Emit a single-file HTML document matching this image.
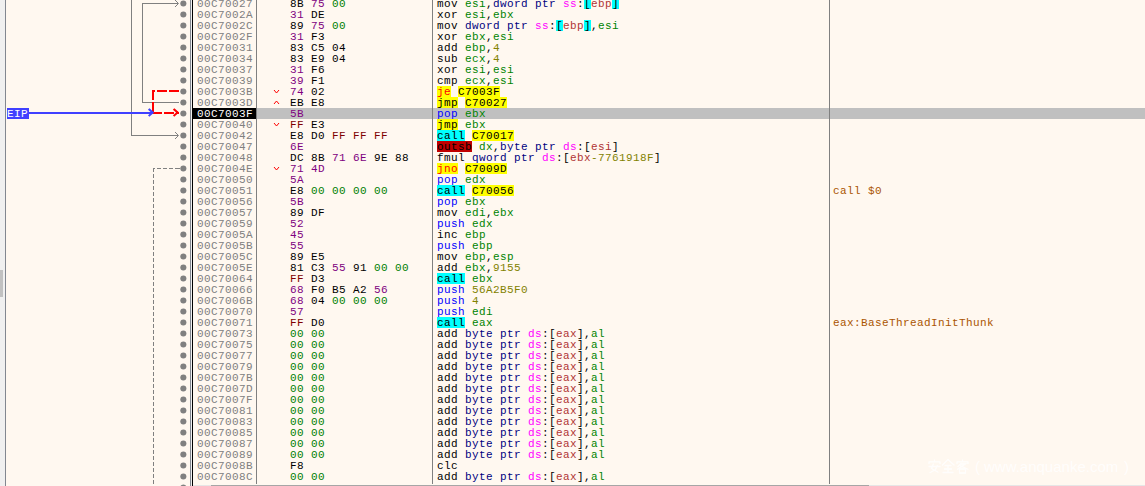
<!DOCTYPE html>
<html><head><meta charset="utf-8"><title>x64dbg</title>
<style>
html,body{margin:0;padding:0;}
body{width:1145px;height:486px;overflow:hidden;background:#fff8f0;position:relative;}
#root{position:absolute;left:0;top:0;width:1145px;height:486px;overflow:hidden;background:#fff8f0;}
.t{position:absolute;height:11px;line-height:11px;font-family:"Liberation Mono",monospace;font-size:11px;letter-spacing:0.4px;white-space:pre;overflow:visible;}
.t i{font-style:normal;position:relative;top:1px;}
.r{position:absolute;left:0;width:1145px;height:11px;}
.ln{position:absolute;}
</style></head><body><div id="root">
<div class="ln" style="left:257px;top:108px;width:888px;height:11px;background:#c0c0c0"></div>
<div class="ln" style="left:193px;top:108px;width:63px;height:11px;background:#000"></div>
<div class="ln" style="left:0;top:0;width:5px;height:486px;background:#f0f0f0"></div>
<div class="ln" style="left:0;top:270px;width:3px;height:27px;background:#c1c1c1"></div>
<div class="ln" style="left:5px;top:0;width:1px;height:486px;background:#828790"></div>
<div class="ln" style="left:190px;top:0;width:1px;height:486px;background:#828790"></div>
<div class="ln" style="left:191px;top:0;width:1px;height:486px;background:#f0f0f0"></div>
<div class="ln" style="left:192px;top:0;width:1px;height:486px;background:#000"></div>
<div class="ln" style="left:256px;top:0;width:1px;height:484px;background:#808080"></div>
<div class="ln" style="left:432px;top:0;width:1px;height:484px;background:#808080"></div>
<div class="ln" style="left:829px;top:0;width:1px;height:484px;background:#808080"></div>
<svg class="ln" style="left:0;top:0" width="193" height="486" viewBox="0 0 193 486"><g fill="none" stroke="#808080" stroke-width="1" shape-rendering="crispEdges"><path d="M131.5 -1 V135.5 H178"/><path d="M179 102.5 H142.5 V3.5 H178"/></g><g fill="none" stroke="#808080" stroke-width="1"><path d="M175 132.0 L178.5 135.5 L175 139.0"/><path d="M175 0.0 L178.5 3.5 L175 7.0"/></g><g fill="#808080" shape-rendering="crispEdges"><rect x="175" y="168" width="5" height="1"/><rect x="169" y="168" width="4" height="1"/><rect x="163" y="168" width="4" height="1"/><rect x="157" y="168" width="4" height="1"/><rect x="153" y="168" width="2" height="1"/><rect x="153" y="168" width="1" height="4"/><rect x="153" y="174" width="1" height="4"/><rect x="153" y="180" width="1" height="4"/><rect x="153" y="186" width="1" height="4"/><rect x="153" y="192" width="1" height="4"/><rect x="153" y="198" width="1" height="4"/><rect x="153" y="204" width="1" height="4"/><rect x="153" y="210" width="1" height="4"/><rect x="153" y="216" width="1" height="4"/><rect x="153" y="222" width="1" height="4"/><rect x="153" y="228" width="1" height="4"/><rect x="153" y="234" width="1" height="4"/><rect x="153" y="240" width="1" height="4"/><rect x="153" y="246" width="1" height="4"/><rect x="153" y="252" width="1" height="4"/><rect x="153" y="258" width="1" height="4"/><rect x="153" y="264" width="1" height="4"/><rect x="153" y="270" width="1" height="4"/><rect x="153" y="276" width="1" height="4"/><rect x="153" y="282" width="1" height="4"/><rect x="153" y="288" width="1" height="4"/><rect x="153" y="294" width="1" height="4"/><rect x="153" y="300" width="1" height="4"/><rect x="153" y="306" width="1" height="4"/><rect x="153" y="312" width="1" height="4"/><rect x="153" y="318" width="1" height="4"/><rect x="153" y="324" width="1" height="4"/><rect x="153" y="330" width="1" height="4"/><rect x="153" y="336" width="1" height="4"/><rect x="153" y="342" width="1" height="4"/><rect x="153" y="348" width="1" height="4"/><rect x="153" y="354" width="1" height="4"/><rect x="153" y="360" width="1" height="4"/><rect x="153" y="366" width="1" height="4"/><rect x="153" y="372" width="1" height="4"/><rect x="153" y="378" width="1" height="4"/><rect x="153" y="384" width="1" height="4"/><rect x="153" y="390" width="1" height="4"/><rect x="153" y="396" width="1" height="4"/><rect x="153" y="402" width="1" height="4"/><rect x="153" y="408" width="1" height="4"/><rect x="153" y="414" width="1" height="4"/><rect x="153" y="420" width="1" height="4"/><rect x="153" y="426" width="1" height="4"/><rect x="153" y="432" width="1" height="4"/><rect x="153" y="438" width="1" height="4"/><rect x="153" y="444" width="1" height="4"/><rect x="153" y="450" width="1" height="4"/><rect x="153" y="456" width="1" height="4"/><rect x="153" y="462" width="1" height="4"/><rect x="153" y="468" width="1" height="4"/><rect x="153" y="474" width="1" height="4"/><rect x="153" y="480" width="1" height="4"/></g><g fill="#ff0000" shape-rendering="crispEdges"><rect x="169" y="90" width="10" height="2"/><rect x="157" y="90" width="10" height="2"/><rect x="152" y="90" width="3" height="2"/><rect x="152" y="90" width="2" height="10"/><rect x="152" y="102" width="2" height="12"/><rect x="152" y="112" width="10" height="2"/><rect x="164" y="112" width="10" height="2"/><rect x="176" y="112" width="3" height="2"/></g><path d="M174.3 109.6 L177.6 112.6 M174.3 115.4 L177.6 112.4" fill="none" stroke="#ff0000" stroke-width="2" stroke-linecap="square"/><rect x="29" y="112" width="124" height="2" fill="#4040ff" shape-rendering="crispEdges"/><path d="M149.4 109.6 L152.7 112.6 M149.4 115.4 L152.7 112.4" fill="none" stroke="#4040ff" stroke-width="2" stroke-linecap="square"/><circle cx="183.35" cy="3.45" r="3.05" fill="#808080"/><circle cx="183.35" cy="14.45" r="3.05" fill="#808080"/><circle cx="183.35" cy="25.45" r="3.05" fill="#808080"/><circle cx="183.35" cy="36.45" r="3.05" fill="#808080"/><circle cx="183.35" cy="47.45" r="3.05" fill="#808080"/><circle cx="183.35" cy="58.45" r="3.05" fill="#808080"/><circle cx="183.35" cy="69.45" r="3.05" fill="#808080"/><circle cx="183.35" cy="80.45" r="3.05" fill="#808080"/><circle cx="183.35" cy="91.45" r="3.05" fill="#808080"/><circle cx="183.35" cy="102.45" r="3.05" fill="#808080"/><circle cx="183.35" cy="113.45" r="3.05" fill="#808080"/><circle cx="183.35" cy="124.45" r="3.05" fill="#808080"/><circle cx="183.35" cy="135.45" r="3.05" fill="#808080"/><circle cx="183.35" cy="146.45" r="3.05" fill="#808080"/><circle cx="183.35" cy="157.45" r="3.05" fill="#808080"/><circle cx="183.35" cy="168.45" r="3.05" fill="#808080"/><circle cx="183.35" cy="179.45" r="3.05" fill="#808080"/><circle cx="183.35" cy="190.45" r="3.05" fill="#808080"/><circle cx="183.35" cy="201.45" r="3.05" fill="#808080"/><circle cx="183.35" cy="212.45" r="3.05" fill="#808080"/><circle cx="183.35" cy="223.45" r="3.05" fill="#808080"/><circle cx="183.35" cy="234.45" r="3.05" fill="#808080"/><circle cx="183.35" cy="245.45" r="3.05" fill="#808080"/><circle cx="183.35" cy="256.45" r="3.05" fill="#808080"/><circle cx="183.35" cy="267.45" r="3.05" fill="#808080"/><circle cx="183.35" cy="278.45" r="3.05" fill="#808080"/><circle cx="183.35" cy="289.45" r="3.05" fill="#808080"/><circle cx="183.35" cy="300.45" r="3.05" fill="#808080"/><circle cx="183.35" cy="311.45" r="3.05" fill="#808080"/><circle cx="183.35" cy="322.45" r="3.05" fill="#808080"/><circle cx="183.35" cy="333.45" r="3.05" fill="#808080"/><circle cx="183.35" cy="344.45" r="3.05" fill="#808080"/><circle cx="183.35" cy="355.45" r="3.05" fill="#808080"/><circle cx="183.35" cy="366.45" r="3.05" fill="#808080"/><circle cx="183.35" cy="377.45" r="3.05" fill="#808080"/><circle cx="183.35" cy="388.45" r="3.05" fill="#808080"/><circle cx="183.35" cy="399.45" r="3.05" fill="#808080"/><circle cx="183.35" cy="410.45" r="3.05" fill="#808080"/><circle cx="183.35" cy="421.45" r="3.05" fill="#808080"/><circle cx="183.35" cy="432.45" r="3.05" fill="#808080"/><circle cx="183.35" cy="443.45" r="3.05" fill="#808080"/><circle cx="183.35" cy="454.45" r="3.05" fill="#808080"/><circle cx="183.35" cy="465.45" r="3.05" fill="#808080"/><circle cx="183.35" cy="476.45" r="3.05" fill="#808080"/><circle cx="183.35" cy="487.45" r="3.05" fill="#808080"/></svg>
<div class="ln" style="left:7px;top:108px;width:22px;height:11px;background:#4040ff"></div>
<span class="t" style="left:7px;top:108px;color:#fff"><i>EIP</i></span>
<span class="t" style="left:197px;top:-2px;width:56px;color:#808080;"><i>00C70027</i></span>
<span class="t" style="left:290px;top:-2px;width:14px;color:#000000;"><i>8B</i></span>
<span class="t" style="left:311px;top:-2px;width:14px;color:#800080;"><i>75</i></span>
<span class="t" style="left:332px;top:-2px;width:14px;color:#008000;"><i>00</i></span>
<span class="t" style="left:437px;top:-2px;width:21px;color:#000000;"><i>mov</i></span>
<span class="t" style="left:465px;top:-2px;width:21px;color:#008300;"><i>esi</i></span>
<span class="t" style="left:486px;top:-2px;width:7px;color:#000000;"><i>,</i></span>
<span class="t" style="left:493px;top:-2px;width:63px;color:#000080;"><i>dword ptr</i></span>
<span class="t" style="left:563px;top:-2px;width:14px;color:#ff00ff;"><i>ss</i></span>
<span class="t" style="left:577px;top:-2px;width:7px;color:#000000;"><i>:</i></span>
<span class="t" style="left:584px;top:-2px;width:7px;color:#000000;background:#00ffff;"><i>[</i></span>
<span class="t" style="left:591px;top:-2px;width:21px;color:#b03434;"><i>ebp</i></span>
<span class="t" style="left:612px;top:-2px;width:7px;color:#000000;background:#00ffff;"><i>]</i></span>
<span class="t" style="left:197px;top:9px;width:56px;color:#808080;"><i>00C7002A</i></span>
<span class="t" style="left:290px;top:9px;width:14px;color:#800080;"><i>31</i></span>
<span class="t" style="left:311px;top:9px;width:14px;color:#000000;"><i>DE</i></span>
<span class="t" style="left:437px;top:9px;width:21px;color:#000000;"><i>xor</i></span>
<span class="t" style="left:465px;top:9px;width:21px;color:#008300;"><i>esi</i></span>
<span class="t" style="left:486px;top:9px;width:7px;color:#000000;"><i>,</i></span>
<span class="t" style="left:493px;top:9px;width:21px;color:#008300;"><i>ebx</i></span>
<span class="t" style="left:197px;top:20px;width:56px;color:#808080;"><i>00C7002C</i></span>
<span class="t" style="left:290px;top:20px;width:14px;color:#000000;"><i>89</i></span>
<span class="t" style="left:311px;top:20px;width:14px;color:#800080;"><i>75</i></span>
<span class="t" style="left:332px;top:20px;width:14px;color:#008000;"><i>00</i></span>
<span class="t" style="left:437px;top:20px;width:21px;color:#000000;"><i>mov</i></span>
<span class="t" style="left:465px;top:20px;width:63px;color:#000080;"><i>dword ptr</i></span>
<span class="t" style="left:535px;top:20px;width:14px;color:#ff00ff;"><i>ss</i></span>
<span class="t" style="left:549px;top:20px;width:7px;color:#000000;"><i>:</i></span>
<span class="t" style="left:556px;top:20px;width:7px;color:#000000;background:#00ffff;"><i>[</i></span>
<span class="t" style="left:563px;top:20px;width:21px;color:#b03434;"><i>ebp</i></span>
<span class="t" style="left:584px;top:20px;width:7px;color:#000000;background:#00ffff;"><i>]</i></span>
<span class="t" style="left:591px;top:20px;width:7px;color:#000000;"><i>,</i></span>
<span class="t" style="left:598px;top:20px;width:21px;color:#008300;"><i>esi</i></span>
<span class="t" style="left:197px;top:31px;width:56px;color:#808080;"><i>00C7002F</i></span>
<span class="t" style="left:290px;top:31px;width:14px;color:#800080;"><i>31</i></span>
<span class="t" style="left:311px;top:31px;width:14px;color:#000000;"><i>F3</i></span>
<span class="t" style="left:437px;top:31px;width:21px;color:#000000;"><i>xor</i></span>
<span class="t" style="left:465px;top:31px;width:21px;color:#008300;"><i>ebx</i></span>
<span class="t" style="left:486px;top:31px;width:7px;color:#000000;"><i>,</i></span>
<span class="t" style="left:493px;top:31px;width:21px;color:#008300;"><i>esi</i></span>
<span class="t" style="left:197px;top:42px;width:56px;color:#808080;"><i>00C70031</i></span>
<span class="t" style="left:290px;top:42px;width:14px;color:#000000;"><i>83</i></span>
<span class="t" style="left:311px;top:42px;width:14px;color:#000000;"><i>C5</i></span>
<span class="t" style="left:332px;top:42px;width:14px;color:#000000;"><i>04</i></span>
<span class="t" style="left:437px;top:42px;width:21px;color:#000000;"><i>add</i></span>
<span class="t" style="left:465px;top:42px;width:21px;color:#008300;"><i>ebp</i></span>
<span class="t" style="left:486px;top:42px;width:7px;color:#000000;"><i>,</i></span>
<span class="t" style="left:493px;top:42px;width:7px;color:#828200;"><i>4</i></span>
<span class="t" style="left:197px;top:53px;width:56px;color:#808080;"><i>00C70034</i></span>
<span class="t" style="left:290px;top:53px;width:14px;color:#000000;"><i>83</i></span>
<span class="t" style="left:311px;top:53px;width:14px;color:#000000;"><i>E9</i></span>
<span class="t" style="left:332px;top:53px;width:14px;color:#000000;"><i>04</i></span>
<span class="t" style="left:437px;top:53px;width:21px;color:#000000;"><i>sub</i></span>
<span class="t" style="left:465px;top:53px;width:21px;color:#008300;"><i>ecx</i></span>
<span class="t" style="left:486px;top:53px;width:7px;color:#000000;"><i>,</i></span>
<span class="t" style="left:493px;top:53px;width:7px;color:#828200;"><i>4</i></span>
<span class="t" style="left:197px;top:64px;width:56px;color:#808080;"><i>00C70037</i></span>
<span class="t" style="left:290px;top:64px;width:14px;color:#800080;"><i>31</i></span>
<span class="t" style="left:311px;top:64px;width:14px;color:#000000;"><i>F6</i></span>
<span class="t" style="left:437px;top:64px;width:21px;color:#000000;"><i>xor</i></span>
<span class="t" style="left:465px;top:64px;width:21px;color:#008300;"><i>esi</i></span>
<span class="t" style="left:486px;top:64px;width:7px;color:#000000;"><i>,</i></span>
<span class="t" style="left:493px;top:64px;width:21px;color:#008300;"><i>esi</i></span>
<span class="t" style="left:197px;top:75px;width:56px;color:#808080;"><i>00C70039</i></span>
<span class="t" style="left:290px;top:75px;width:14px;color:#800080;"><i>39</i></span>
<span class="t" style="left:311px;top:75px;width:14px;color:#000000;"><i>F1</i></span>
<span class="t" style="left:437px;top:75px;width:21px;color:#000000;"><i>cmp</i></span>
<span class="t" style="left:465px;top:75px;width:21px;color:#008300;"><i>ecx</i></span>
<span class="t" style="left:486px;top:75px;width:7px;color:#000000;"><i>,</i></span>
<span class="t" style="left:493px;top:75px;width:21px;color:#008300;"><i>esi</i></span>
<span class="t" style="left:197px;top:86px;width:56px;color:#808080;"><i>00C7003B</i></span>
<svg class="ln" style="left:0;top:0" width="300" height="486"><path d="M274 90.0 L276.5 93.0 L279 90.0" fill="none" stroke="#ff0000" stroke-width="1"/></svg>
<span class="t" style="left:290px;top:86px;width:14px;color:#800080;"><i>74</i></span>
<span class="t" style="left:311px;top:86px;width:14px;color:#000000;"><i>02</i></span>
<span class="t" style="left:437px;top:86px;width:14px;color:#ff0000;background:#ffff00;"><i>je</i></span>
<span class="t" style="left:458px;top:86px;width:42px;color:#000000;background:#ffff00;"><i>C7003F</i></span>
<span class="t" style="left:197px;top:97px;width:56px;color:#808080;"><i>00C7003D</i></span>
<svg class="ln" style="left:0;top:0" width="300" height="486"><path d="M274 104.0 L276.5 101.0 L279 104.0" fill="none" stroke="#ff0000" stroke-width="1"/></svg>
<span class="t" style="left:290px;top:97px;width:14px;color:#000000;"><i>EB</i></span>
<span class="t" style="left:311px;top:97px;width:14px;color:#000000;"><i>E8</i></span>
<span class="t" style="left:437px;top:97px;width:21px;color:#000000;background:#ffff00;"><i>jmp</i></span>
<span class="t" style="left:465px;top:97px;width:42px;color:#000000;background:#ffff00;"><i>C70027</i></span>
<span class="t" style="left:197px;top:108px;width:56px;color:#ffffff;"><i>00C7003F</i></span>
<span class="t" style="left:290px;top:108px;width:14px;color:#800080;"><i>5B</i></span>
<span class="t" style="left:437px;top:108px;width:21px;color:#0000ff;"><i>pop</i></span>
<span class="t" style="left:465px;top:108px;width:21px;color:#008300;"><i>ebx</i></span>
<span class="t" style="left:197px;top:119px;width:56px;color:#808080;"><i>00C70040</i></span>
<svg class="ln" style="left:0;top:0" width="300" height="486"><path d="M274 123.0 L276.5 126.0 L279 123.0" fill="none" stroke="#ff0000" stroke-width="1"/></svg>
<span class="t" style="left:290px;top:119px;width:14px;color:#800000;"><i>FF</i></span>
<span class="t" style="left:311px;top:119px;width:14px;color:#000000;"><i>E3</i></span>
<span class="t" style="left:437px;top:119px;width:21px;color:#000000;background:#ffff00;"><i>jmp</i></span>
<span class="t" style="left:465px;top:119px;width:21px;color:#008300;"><i>ebx</i></span>
<span class="t" style="left:197px;top:130px;width:56px;color:#808080;"><i>00C70042</i></span>
<span class="t" style="left:290px;top:130px;width:14px;color:#000000;"><i>E8</i></span>
<span class="t" style="left:311px;top:130px;width:14px;color:#000000;"><i>D0</i></span>
<span class="t" style="left:332px;top:130px;width:14px;color:#800000;"><i>FF</i></span>
<span class="t" style="left:353px;top:130px;width:14px;color:#800000;"><i>FF</i></span>
<span class="t" style="left:374px;top:130px;width:14px;color:#800000;"><i>FF</i></span>
<span class="t" style="left:437px;top:130px;width:28px;color:#000000;background:#00ffff;"><i>call</i></span>
<span class="t" style="left:472px;top:130px;width:42px;color:#000000;background:#ffff00;"><i>C70017</i></span>
<span class="t" style="left:197px;top:141px;width:56px;color:#808080;"><i>00C70047</i></span>
<span class="t" style="left:290px;top:141px;width:14px;color:#800080;"><i>6E</i></span>
<span class="t" style="left:437px;top:141px;width:35px;color:#000000;background:#c00000;"><i>outsb</i></span>
<span class="t" style="left:479px;top:141px;width:14px;color:#008300;"><i>dx</i></span>
<span class="t" style="left:493px;top:141px;width:7px;color:#000000;"><i>,</i></span>
<span class="t" style="left:500px;top:141px;width:56px;color:#000080;"><i>byte ptr</i></span>
<span class="t" style="left:563px;top:141px;width:14px;color:#ff00ff;"><i>ds</i></span>
<span class="t" style="left:577px;top:141px;width:7px;color:#000000;"><i>:</i></span>
<span class="t" style="left:584px;top:141px;width:7px;color:#000000;"><i>[</i></span>
<span class="t" style="left:591px;top:141px;width:21px;color:#b03434;"><i>esi</i></span>
<span class="t" style="left:612px;top:141px;width:7px;color:#000000;"><i>]</i></span>
<span class="t" style="left:197px;top:152px;width:56px;color:#808080;"><i>00C70048</i></span>
<span class="t" style="left:290px;top:152px;width:14px;color:#000000;"><i>DC</i></span>
<span class="t" style="left:311px;top:152px;width:14px;color:#000000;"><i>8B</i></span>
<span class="t" style="left:332px;top:152px;width:14px;color:#800080;"><i>71</i></span>
<span class="t" style="left:353px;top:152px;width:14px;color:#800080;"><i>6E</i></span>
<span class="t" style="left:374px;top:152px;width:14px;color:#000000;"><i>9E</i></span>
<span class="t" style="left:395px;top:152px;width:14px;color:#000000;"><i>88</i></span>
<span class="t" style="left:437px;top:152px;width:28px;color:#000000;"><i>fmul</i></span>
<span class="t" style="left:472px;top:152px;width:63px;color:#000080;"><i>qword ptr</i></span>
<span class="t" style="left:542px;top:152px;width:14px;color:#ff00ff;"><i>ds</i></span>
<span class="t" style="left:556px;top:152px;width:7px;color:#000000;"><i>:</i></span>
<span class="t" style="left:563px;top:152px;width:7px;color:#000000;"><i>[</i></span>
<span class="t" style="left:570px;top:152px;width:21px;color:#b03434;"><i>ebx</i></span>
<span class="t" style="left:591px;top:152px;width:63px;color:#828200;"><i>-7761918F</i></span>
<span class="t" style="left:654px;top:152px;width:7px;color:#000000;"><i>]</i></span>
<span class="t" style="left:197px;top:163px;width:56px;color:#808080;"><i>00C7004E</i></span>
<svg class="ln" style="left:0;top:0" width="300" height="486"><path d="M274 167.0 L276.5 170.0 L279 167.0" fill="none" stroke="#ff0000" stroke-width="1"/></svg>
<span class="t" style="left:290px;top:163px;width:14px;color:#800080;"><i>71</i></span>
<span class="t" style="left:311px;top:163px;width:14px;color:#800080;"><i>4D</i></span>
<span class="t" style="left:437px;top:163px;width:21px;color:#ff0000;background:#ffff00;"><i>jno</i></span>
<span class="t" style="left:465px;top:163px;width:42px;color:#000000;background:#ffff00;"><i>C7009D</i></span>
<span class="t" style="left:197px;top:174px;width:56px;color:#808080;"><i>00C70050</i></span>
<span class="t" style="left:290px;top:174px;width:14px;color:#800080;"><i>5A</i></span>
<span class="t" style="left:437px;top:174px;width:21px;color:#0000ff;"><i>pop</i></span>
<span class="t" style="left:465px;top:174px;width:21px;color:#008300;"><i>edx</i></span>
<span class="t" style="left:197px;top:185px;width:56px;color:#808080;"><i>00C70051</i></span>
<span class="t" style="left:290px;top:185px;width:14px;color:#000000;"><i>E8</i></span>
<span class="t" style="left:311px;top:185px;width:14px;color:#008000;"><i>00</i></span>
<span class="t" style="left:332px;top:185px;width:14px;color:#008000;"><i>00</i></span>
<span class="t" style="left:353px;top:185px;width:14px;color:#008000;"><i>00</i></span>
<span class="t" style="left:374px;top:185px;width:14px;color:#008000;"><i>00</i></span>
<span class="t" style="left:437px;top:185px;width:28px;color:#000000;background:#00ffff;"><i>call</i></span>
<span class="t" style="left:472px;top:185px;width:42px;color:#000000;background:#ffff00;"><i>C70056</i></span>
<span class="t" style="left:833px;top:185px;width:49px;color:#aa5500;"><i>call $0</i></span>
<span class="t" style="left:197px;top:196px;width:56px;color:#808080;"><i>00C70056</i></span>
<span class="t" style="left:290px;top:196px;width:14px;color:#800080;"><i>5B</i></span>
<span class="t" style="left:437px;top:196px;width:21px;color:#0000ff;"><i>pop</i></span>
<span class="t" style="left:465px;top:196px;width:21px;color:#008300;"><i>ebx</i></span>
<span class="t" style="left:197px;top:207px;width:56px;color:#808080;"><i>00C70057</i></span>
<span class="t" style="left:290px;top:207px;width:14px;color:#000000;"><i>89</i></span>
<span class="t" style="left:311px;top:207px;width:14px;color:#000000;"><i>DF</i></span>
<span class="t" style="left:437px;top:207px;width:21px;color:#000000;"><i>mov</i></span>
<span class="t" style="left:465px;top:207px;width:21px;color:#008300;"><i>edi</i></span>
<span class="t" style="left:486px;top:207px;width:7px;color:#000000;"><i>,</i></span>
<span class="t" style="left:493px;top:207px;width:21px;color:#008300;"><i>ebx</i></span>
<span class="t" style="left:197px;top:218px;width:56px;color:#808080;"><i>00C70059</i></span>
<span class="t" style="left:290px;top:218px;width:14px;color:#800080;"><i>52</i></span>
<span class="t" style="left:437px;top:218px;width:28px;color:#0000ff;"><i>push</i></span>
<span class="t" style="left:472px;top:218px;width:21px;color:#008300;"><i>edx</i></span>
<span class="t" style="left:197px;top:229px;width:56px;color:#808080;"><i>00C7005A</i></span>
<span class="t" style="left:290px;top:229px;width:14px;color:#800080;"><i>45</i></span>
<span class="t" style="left:437px;top:229px;width:21px;color:#000000;"><i>inc</i></span>
<span class="t" style="left:465px;top:229px;width:21px;color:#008300;"><i>ebp</i></span>
<span class="t" style="left:197px;top:240px;width:56px;color:#808080;"><i>00C7005B</i></span>
<span class="t" style="left:290px;top:240px;width:14px;color:#800080;"><i>55</i></span>
<span class="t" style="left:437px;top:240px;width:28px;color:#0000ff;"><i>push</i></span>
<span class="t" style="left:472px;top:240px;width:21px;color:#008300;"><i>ebp</i></span>
<span class="t" style="left:197px;top:251px;width:56px;color:#808080;"><i>00C7005C</i></span>
<span class="t" style="left:290px;top:251px;width:14px;color:#000000;"><i>89</i></span>
<span class="t" style="left:311px;top:251px;width:14px;color:#000000;"><i>E5</i></span>
<span class="t" style="left:437px;top:251px;width:21px;color:#000000;"><i>mov</i></span>
<span class="t" style="left:465px;top:251px;width:21px;color:#008300;"><i>ebp</i></span>
<span class="t" style="left:486px;top:251px;width:7px;color:#000000;"><i>,</i></span>
<span class="t" style="left:493px;top:251px;width:21px;color:#008300;"><i>esp</i></span>
<span class="t" style="left:197px;top:262px;width:56px;color:#808080;"><i>00C7005E</i></span>
<span class="t" style="left:290px;top:262px;width:14px;color:#000000;"><i>81</i></span>
<span class="t" style="left:311px;top:262px;width:14px;color:#000000;"><i>C3</i></span>
<span class="t" style="left:332px;top:262px;width:14px;color:#800080;"><i>55</i></span>
<span class="t" style="left:353px;top:262px;width:14px;color:#000000;"><i>91</i></span>
<span class="t" style="left:374px;top:262px;width:14px;color:#008000;"><i>00</i></span>
<span class="t" style="left:395px;top:262px;width:14px;color:#008000;"><i>00</i></span>
<span class="t" style="left:437px;top:262px;width:21px;color:#000000;"><i>add</i></span>
<span class="t" style="left:465px;top:262px;width:21px;color:#008300;"><i>ebx</i></span>
<span class="t" style="left:486px;top:262px;width:7px;color:#000000;"><i>,</i></span>
<span class="t" style="left:493px;top:262px;width:28px;color:#828200;"><i>9155</i></span>
<span class="t" style="left:197px;top:273px;width:56px;color:#808080;"><i>00C70064</i></span>
<span class="t" style="left:290px;top:273px;width:14px;color:#800000;"><i>FF</i></span>
<span class="t" style="left:311px;top:273px;width:14px;color:#000000;"><i>D3</i></span>
<span class="t" style="left:437px;top:273px;width:28px;color:#000000;background:#00ffff;"><i>call</i></span>
<span class="t" style="left:472px;top:273px;width:21px;color:#008300;"><i>ebx</i></span>
<span class="t" style="left:197px;top:284px;width:56px;color:#808080;"><i>00C70066</i></span>
<span class="t" style="left:290px;top:284px;width:14px;color:#800080;"><i>68</i></span>
<span class="t" style="left:311px;top:284px;width:14px;color:#000000;"><i>F0</i></span>
<span class="t" style="left:332px;top:284px;width:14px;color:#000000;"><i>B5</i></span>
<span class="t" style="left:353px;top:284px;width:14px;color:#000000;"><i>A2</i></span>
<span class="t" style="left:374px;top:284px;width:14px;color:#800080;"><i>56</i></span>
<span class="t" style="left:437px;top:284px;width:28px;color:#0000ff;"><i>push</i></span>
<span class="t" style="left:472px;top:284px;width:56px;color:#828200;"><i>56A2B5F0</i></span>
<span class="t" style="left:197px;top:295px;width:56px;color:#808080;"><i>00C7006B</i></span>
<span class="t" style="left:290px;top:295px;width:14px;color:#800080;"><i>68</i></span>
<span class="t" style="left:311px;top:295px;width:14px;color:#000000;"><i>04</i></span>
<span class="t" style="left:332px;top:295px;width:14px;color:#008000;"><i>00</i></span>
<span class="t" style="left:353px;top:295px;width:14px;color:#008000;"><i>00</i></span>
<span class="t" style="left:374px;top:295px;width:14px;color:#008000;"><i>00</i></span>
<span class="t" style="left:437px;top:295px;width:28px;color:#0000ff;"><i>push</i></span>
<span class="t" style="left:472px;top:295px;width:7px;color:#828200;"><i>4</i></span>
<span class="t" style="left:197px;top:306px;width:56px;color:#808080;"><i>00C70070</i></span>
<span class="t" style="left:290px;top:306px;width:14px;color:#800080;"><i>57</i></span>
<span class="t" style="left:437px;top:306px;width:28px;color:#0000ff;"><i>push</i></span>
<span class="t" style="left:472px;top:306px;width:21px;color:#008300;"><i>edi</i></span>
<span class="t" style="left:197px;top:317px;width:56px;color:#808080;"><i>00C70071</i></span>
<span class="t" style="left:290px;top:317px;width:14px;color:#800000;"><i>FF</i></span>
<span class="t" style="left:311px;top:317px;width:14px;color:#000000;"><i>D0</i></span>
<span class="t" style="left:437px;top:317px;width:28px;color:#000000;background:#00ffff;"><i>call</i></span>
<span class="t" style="left:472px;top:317px;width:21px;color:#008300;"><i>eax</i></span>
<span class="t" style="left:833px;top:317px;width:161px;color:#aa5500;"><i>eax:BaseThreadInitThunk</i></span>
<span class="t" style="left:197px;top:328px;width:56px;color:#808080;"><i>00C70073</i></span>
<span class="t" style="left:290px;top:328px;width:14px;color:#008000;"><i>00</i></span>
<span class="t" style="left:311px;top:328px;width:14px;color:#008000;"><i>00</i></span>
<span class="t" style="left:437px;top:328px;width:21px;color:#000000;"><i>add</i></span>
<span class="t" style="left:465px;top:328px;width:56px;color:#000080;"><i>byte ptr</i></span>
<span class="t" style="left:528px;top:328px;width:14px;color:#ff00ff;"><i>ds</i></span>
<span class="t" style="left:542px;top:328px;width:7px;color:#000000;"><i>:</i></span>
<span class="t" style="left:549px;top:328px;width:7px;color:#000000;"><i>[</i></span>
<span class="t" style="left:556px;top:328px;width:21px;color:#b03434;"><i>eax</i></span>
<span class="t" style="left:577px;top:328px;width:7px;color:#000000;"><i>]</i></span>
<span class="t" style="left:584px;top:328px;width:7px;color:#000000;"><i>,</i></span>
<span class="t" style="left:591px;top:328px;width:14px;color:#008300;"><i>al</i></span>
<span class="t" style="left:197px;top:339px;width:56px;color:#808080;"><i>00C70075</i></span>
<span class="t" style="left:290px;top:339px;width:14px;color:#008000;"><i>00</i></span>
<span class="t" style="left:311px;top:339px;width:14px;color:#008000;"><i>00</i></span>
<span class="t" style="left:437px;top:339px;width:21px;color:#000000;"><i>add</i></span>
<span class="t" style="left:465px;top:339px;width:56px;color:#000080;"><i>byte ptr</i></span>
<span class="t" style="left:528px;top:339px;width:14px;color:#ff00ff;"><i>ds</i></span>
<span class="t" style="left:542px;top:339px;width:7px;color:#000000;"><i>:</i></span>
<span class="t" style="left:549px;top:339px;width:7px;color:#000000;"><i>[</i></span>
<span class="t" style="left:556px;top:339px;width:21px;color:#b03434;"><i>eax</i></span>
<span class="t" style="left:577px;top:339px;width:7px;color:#000000;"><i>]</i></span>
<span class="t" style="left:584px;top:339px;width:7px;color:#000000;"><i>,</i></span>
<span class="t" style="left:591px;top:339px;width:14px;color:#008300;"><i>al</i></span>
<span class="t" style="left:197px;top:350px;width:56px;color:#808080;"><i>00C70077</i></span>
<span class="t" style="left:290px;top:350px;width:14px;color:#008000;"><i>00</i></span>
<span class="t" style="left:311px;top:350px;width:14px;color:#008000;"><i>00</i></span>
<span class="t" style="left:437px;top:350px;width:21px;color:#000000;"><i>add</i></span>
<span class="t" style="left:465px;top:350px;width:56px;color:#000080;"><i>byte ptr</i></span>
<span class="t" style="left:528px;top:350px;width:14px;color:#ff00ff;"><i>ds</i></span>
<span class="t" style="left:542px;top:350px;width:7px;color:#000000;"><i>:</i></span>
<span class="t" style="left:549px;top:350px;width:7px;color:#000000;"><i>[</i></span>
<span class="t" style="left:556px;top:350px;width:21px;color:#b03434;"><i>eax</i></span>
<span class="t" style="left:577px;top:350px;width:7px;color:#000000;"><i>]</i></span>
<span class="t" style="left:584px;top:350px;width:7px;color:#000000;"><i>,</i></span>
<span class="t" style="left:591px;top:350px;width:14px;color:#008300;"><i>al</i></span>
<span class="t" style="left:197px;top:361px;width:56px;color:#808080;"><i>00C70079</i></span>
<span class="t" style="left:290px;top:361px;width:14px;color:#008000;"><i>00</i></span>
<span class="t" style="left:311px;top:361px;width:14px;color:#008000;"><i>00</i></span>
<span class="t" style="left:437px;top:361px;width:21px;color:#000000;"><i>add</i></span>
<span class="t" style="left:465px;top:361px;width:56px;color:#000080;"><i>byte ptr</i></span>
<span class="t" style="left:528px;top:361px;width:14px;color:#ff00ff;"><i>ds</i></span>
<span class="t" style="left:542px;top:361px;width:7px;color:#000000;"><i>:</i></span>
<span class="t" style="left:549px;top:361px;width:7px;color:#000000;"><i>[</i></span>
<span class="t" style="left:556px;top:361px;width:21px;color:#b03434;"><i>eax</i></span>
<span class="t" style="left:577px;top:361px;width:7px;color:#000000;"><i>]</i></span>
<span class="t" style="left:584px;top:361px;width:7px;color:#000000;"><i>,</i></span>
<span class="t" style="left:591px;top:361px;width:14px;color:#008300;"><i>al</i></span>
<span class="t" style="left:197px;top:372px;width:56px;color:#808080;"><i>00C7007B</i></span>
<span class="t" style="left:290px;top:372px;width:14px;color:#008000;"><i>00</i></span>
<span class="t" style="left:311px;top:372px;width:14px;color:#008000;"><i>00</i></span>
<span class="t" style="left:437px;top:372px;width:21px;color:#000000;"><i>add</i></span>
<span class="t" style="left:465px;top:372px;width:56px;color:#000080;"><i>byte ptr</i></span>
<span class="t" style="left:528px;top:372px;width:14px;color:#ff00ff;"><i>ds</i></span>
<span class="t" style="left:542px;top:372px;width:7px;color:#000000;"><i>:</i></span>
<span class="t" style="left:549px;top:372px;width:7px;color:#000000;"><i>[</i></span>
<span class="t" style="left:556px;top:372px;width:21px;color:#b03434;"><i>eax</i></span>
<span class="t" style="left:577px;top:372px;width:7px;color:#000000;"><i>]</i></span>
<span class="t" style="left:584px;top:372px;width:7px;color:#000000;"><i>,</i></span>
<span class="t" style="left:591px;top:372px;width:14px;color:#008300;"><i>al</i></span>
<span class="t" style="left:197px;top:383px;width:56px;color:#808080;"><i>00C7007D</i></span>
<span class="t" style="left:290px;top:383px;width:14px;color:#008000;"><i>00</i></span>
<span class="t" style="left:311px;top:383px;width:14px;color:#008000;"><i>00</i></span>
<span class="t" style="left:437px;top:383px;width:21px;color:#000000;"><i>add</i></span>
<span class="t" style="left:465px;top:383px;width:56px;color:#000080;"><i>byte ptr</i></span>
<span class="t" style="left:528px;top:383px;width:14px;color:#ff00ff;"><i>ds</i></span>
<span class="t" style="left:542px;top:383px;width:7px;color:#000000;"><i>:</i></span>
<span class="t" style="left:549px;top:383px;width:7px;color:#000000;"><i>[</i></span>
<span class="t" style="left:556px;top:383px;width:21px;color:#b03434;"><i>eax</i></span>
<span class="t" style="left:577px;top:383px;width:7px;color:#000000;"><i>]</i></span>
<span class="t" style="left:584px;top:383px;width:7px;color:#000000;"><i>,</i></span>
<span class="t" style="left:591px;top:383px;width:14px;color:#008300;"><i>al</i></span>
<span class="t" style="left:197px;top:394px;width:56px;color:#808080;"><i>00C7007F</i></span>
<span class="t" style="left:290px;top:394px;width:14px;color:#008000;"><i>00</i></span>
<span class="t" style="left:311px;top:394px;width:14px;color:#008000;"><i>00</i></span>
<span class="t" style="left:437px;top:394px;width:21px;color:#000000;"><i>add</i></span>
<span class="t" style="left:465px;top:394px;width:56px;color:#000080;"><i>byte ptr</i></span>
<span class="t" style="left:528px;top:394px;width:14px;color:#ff00ff;"><i>ds</i></span>
<span class="t" style="left:542px;top:394px;width:7px;color:#000000;"><i>:</i></span>
<span class="t" style="left:549px;top:394px;width:7px;color:#000000;"><i>[</i></span>
<span class="t" style="left:556px;top:394px;width:21px;color:#b03434;"><i>eax</i></span>
<span class="t" style="left:577px;top:394px;width:7px;color:#000000;"><i>]</i></span>
<span class="t" style="left:584px;top:394px;width:7px;color:#000000;"><i>,</i></span>
<span class="t" style="left:591px;top:394px;width:14px;color:#008300;"><i>al</i></span>
<span class="t" style="left:197px;top:405px;width:56px;color:#808080;"><i>00C70081</i></span>
<span class="t" style="left:290px;top:405px;width:14px;color:#008000;"><i>00</i></span>
<span class="t" style="left:311px;top:405px;width:14px;color:#008000;"><i>00</i></span>
<span class="t" style="left:437px;top:405px;width:21px;color:#000000;"><i>add</i></span>
<span class="t" style="left:465px;top:405px;width:56px;color:#000080;"><i>byte ptr</i></span>
<span class="t" style="left:528px;top:405px;width:14px;color:#ff00ff;"><i>ds</i></span>
<span class="t" style="left:542px;top:405px;width:7px;color:#000000;"><i>:</i></span>
<span class="t" style="left:549px;top:405px;width:7px;color:#000000;"><i>[</i></span>
<span class="t" style="left:556px;top:405px;width:21px;color:#b03434;"><i>eax</i></span>
<span class="t" style="left:577px;top:405px;width:7px;color:#000000;"><i>]</i></span>
<span class="t" style="left:584px;top:405px;width:7px;color:#000000;"><i>,</i></span>
<span class="t" style="left:591px;top:405px;width:14px;color:#008300;"><i>al</i></span>
<span class="t" style="left:197px;top:416px;width:56px;color:#808080;"><i>00C70083</i></span>
<span class="t" style="left:290px;top:416px;width:14px;color:#008000;"><i>00</i></span>
<span class="t" style="left:311px;top:416px;width:14px;color:#008000;"><i>00</i></span>
<span class="t" style="left:437px;top:416px;width:21px;color:#000000;"><i>add</i></span>
<span class="t" style="left:465px;top:416px;width:56px;color:#000080;"><i>byte ptr</i></span>
<span class="t" style="left:528px;top:416px;width:14px;color:#ff00ff;"><i>ds</i></span>
<span class="t" style="left:542px;top:416px;width:7px;color:#000000;"><i>:</i></span>
<span class="t" style="left:549px;top:416px;width:7px;color:#000000;"><i>[</i></span>
<span class="t" style="left:556px;top:416px;width:21px;color:#b03434;"><i>eax</i></span>
<span class="t" style="left:577px;top:416px;width:7px;color:#000000;"><i>]</i></span>
<span class="t" style="left:584px;top:416px;width:7px;color:#000000;"><i>,</i></span>
<span class="t" style="left:591px;top:416px;width:14px;color:#008300;"><i>al</i></span>
<span class="t" style="left:197px;top:427px;width:56px;color:#808080;"><i>00C70085</i></span>
<span class="t" style="left:290px;top:427px;width:14px;color:#008000;"><i>00</i></span>
<span class="t" style="left:311px;top:427px;width:14px;color:#008000;"><i>00</i></span>
<span class="t" style="left:437px;top:427px;width:21px;color:#000000;"><i>add</i></span>
<span class="t" style="left:465px;top:427px;width:56px;color:#000080;"><i>byte ptr</i></span>
<span class="t" style="left:528px;top:427px;width:14px;color:#ff00ff;"><i>ds</i></span>
<span class="t" style="left:542px;top:427px;width:7px;color:#000000;"><i>:</i></span>
<span class="t" style="left:549px;top:427px;width:7px;color:#000000;"><i>[</i></span>
<span class="t" style="left:556px;top:427px;width:21px;color:#b03434;"><i>eax</i></span>
<span class="t" style="left:577px;top:427px;width:7px;color:#000000;"><i>]</i></span>
<span class="t" style="left:584px;top:427px;width:7px;color:#000000;"><i>,</i></span>
<span class="t" style="left:591px;top:427px;width:14px;color:#008300;"><i>al</i></span>
<span class="t" style="left:197px;top:438px;width:56px;color:#808080;"><i>00C70087</i></span>
<span class="t" style="left:290px;top:438px;width:14px;color:#008000;"><i>00</i></span>
<span class="t" style="left:311px;top:438px;width:14px;color:#008000;"><i>00</i></span>
<span class="t" style="left:437px;top:438px;width:21px;color:#000000;"><i>add</i></span>
<span class="t" style="left:465px;top:438px;width:56px;color:#000080;"><i>byte ptr</i></span>
<span class="t" style="left:528px;top:438px;width:14px;color:#ff00ff;"><i>ds</i></span>
<span class="t" style="left:542px;top:438px;width:7px;color:#000000;"><i>:</i></span>
<span class="t" style="left:549px;top:438px;width:7px;color:#000000;"><i>[</i></span>
<span class="t" style="left:556px;top:438px;width:21px;color:#b03434;"><i>eax</i></span>
<span class="t" style="left:577px;top:438px;width:7px;color:#000000;"><i>]</i></span>
<span class="t" style="left:584px;top:438px;width:7px;color:#000000;"><i>,</i></span>
<span class="t" style="left:591px;top:438px;width:14px;color:#008300;"><i>al</i></span>
<span class="t" style="left:197px;top:449px;width:56px;color:#808080;"><i>00C70089</i></span>
<span class="t" style="left:290px;top:449px;width:14px;color:#008000;"><i>00</i></span>
<span class="t" style="left:311px;top:449px;width:14px;color:#008000;"><i>00</i></span>
<span class="t" style="left:437px;top:449px;width:21px;color:#000000;"><i>add</i></span>
<span class="t" style="left:465px;top:449px;width:56px;color:#000080;"><i>byte ptr</i></span>
<span class="t" style="left:528px;top:449px;width:14px;color:#ff00ff;"><i>ds</i></span>
<span class="t" style="left:542px;top:449px;width:7px;color:#000000;"><i>:</i></span>
<span class="t" style="left:549px;top:449px;width:7px;color:#000000;"><i>[</i></span>
<span class="t" style="left:556px;top:449px;width:21px;color:#b03434;"><i>eax</i></span>
<span class="t" style="left:577px;top:449px;width:7px;color:#000000;"><i>]</i></span>
<span class="t" style="left:584px;top:449px;width:7px;color:#000000;"><i>,</i></span>
<span class="t" style="left:591px;top:449px;width:14px;color:#008300;"><i>al</i></span>
<span class="t" style="left:197px;top:460px;width:56px;color:#808080;"><i>00C7008B</i></span>
<span class="t" style="left:290px;top:460px;width:14px;color:#000000;"><i>F8</i></span>
<span class="t" style="left:437px;top:460px;width:21px;color:#000000;"><i>clc</i></span>
<span class="t" style="left:197px;top:471px;width:56px;color:#808080;"><i>00C7008C</i></span>
<span class="t" style="left:290px;top:471px;width:14px;color:#008000;"><i>00</i></span>
<span class="t" style="left:311px;top:471px;width:14px;color:#008000;"><i>00</i></span>
<span class="t" style="left:437px;top:471px;width:21px;color:#000000;"><i>add</i></span>
<span class="t" style="left:465px;top:471px;width:56px;color:#000080;"><i>byte ptr</i></span>
<span class="t" style="left:528px;top:471px;width:14px;color:#ff00ff;"><i>ds</i></span>
<span class="t" style="left:542px;top:471px;width:7px;color:#000000;"><i>:</i></span>
<span class="t" style="left:549px;top:471px;width:7px;color:#000000;"><i>[</i></span>
<span class="t" style="left:556px;top:471px;width:21px;color:#b03434;"><i>eax</i></span>
<span class="t" style="left:577px;top:471px;width:7px;color:#000000;"><i>]</i></span>
<span class="t" style="left:584px;top:471px;width:7px;color:#000000;"><i>,</i></span>
<span class="t" style="left:591px;top:471px;width:14px;color:#008300;"><i>al</i></span>
<div class="ln" style="left:193px;top:485px;width:952px;height:1px;background:#e6e6e6"></div>
<div class="ln" style="left:211px;top:485px;width:658px;height:1px;background:#a6a6a6"></div>
<div style="position:absolute;top:458px;height:18px;line-height:18px;font-family:'Liberation Sans',sans-serif;font-size:15px;color:#ffffff;opacity:0.85;white-space:pre;left:975px">(</div>
<div style="position:absolute;top:458px;height:18px;line-height:18px;font-family:'Liberation Sans',sans-serif;font-size:15px;color:#ffffff;opacity:0.85;white-space:pre;left:984px">www.anquanke.com</div>
<div style="position:absolute;top:458px;height:18px;line-height:18px;font-family:'Liberation Sans',sans-serif;font-size:15px;color:#ffffff;opacity:0.85;white-space:pre;left:1124px">)</div>
<svg class="ln" style="left:928px;top:459px;opacity:0.85" width="42" height="16" viewBox="0 0 42 16" fill="none" stroke="#ffffff" stroke-width="1.3"><path d="M6.5 0.5 V2.5 M1 5 V2.8 H12 V5 M5.5 4.5 L3.5 9.5 L10.5 13.5 M9.5 6 L7.5 10.5 L1.5 14 M0.5 7.5 H12.5"/><path d="M20 0.5 L14 6.5 M20 0.5 L26.5 6.5 M16.5 6.5 H23.5 M16 10 H24 M20 6.5 V13.5 M14.5 13.5 H25.5"/><path d="M34.5 0.5 V2.5 M29 5 V2.8 H40 V5 M33.5 4 L29.5 8 M32.5 5 H37.5 L29 10.5 M32 6.5 L40.5 10.5 M31.5 10 H37.5 V14 H31.5 Z"/></svg>
</div></body></html>
